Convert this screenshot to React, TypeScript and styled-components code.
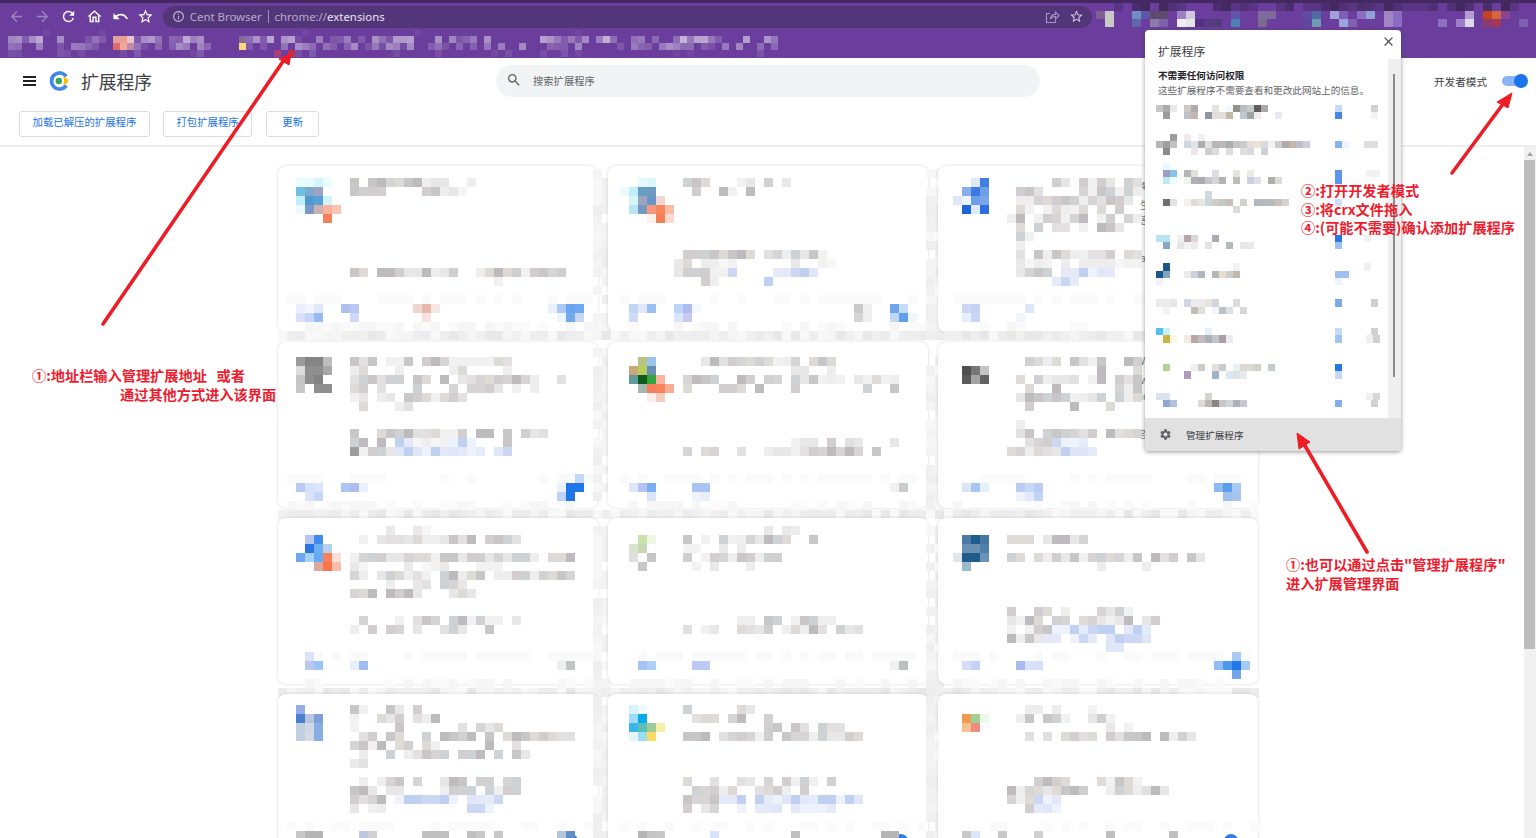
import React from 'react';
import styled, { createGlobalStyle } from 'styled-components';
import {
  MdArrowBack, MdArrowForward, MdRefresh, MdOutlineHome, MdUndo, MdStarBorder,
  MdInfoOutline, MdClose, MdSearch, MdSettings,
} from 'react-icons/md';

const CJK = `"Noto Sans CJK SC", "Noto Sans", "Liberation Sans", sans-serif`;

const Global = createGlobalStyle`
  html, body { margin: 0; padding: 0; background: #fff; height: 100%; overflow: hidden; }
  body { font-family: ${CJK}; }
`;

type Cell = { x: number; y: number; c: string };

const rng = (seed: number) => () => {
  seed = (seed + 0x6d2b79f5) | 0;
  let t = Math.imul(seed ^ (seed >>> 15), 1 | seed);
  t = (t + Math.imul(t ^ (t >>> 7), 61 | t)) ^ t;
  return ((t ^ (t >>> 14)) >>> 0) / 4294967296;
};

const GREY = ['#c8c6c6', '#d6d4d4', '#e2e0e0', '#cfd2d4', '#bdbbbd', '#dedad6', '#e8e7e7', '#d2ced0', '#eeeeee', '#f2f1f1'];
const PALE = ['#f3f2f2', '#ededed', '#f7f6f6', '#e9e9e9'];
const BLUE = ['#e6ebfa', '#dfe6f8', '#cbd7f3', '#eef2fd', '#bfd0f0', '#e4e8f9'];

const parseCells = (s: string): Cell[] =>
  s.split(';').map(e => e.trim()).filter(Boolean).flatMap(e => {
    const [pos, ...cols] = e.split(/\s+/);
    const [r, c] = pos.split(':').map(Number);
    return cols.map((col, i) => ({ x: c + i, y: r, c: `#${col}` })).filter(k => k.c !== '#_');
  });

const parseLines = (s: string, seed: number): Cell[] => {
  const rand = rng(seed);
  const out: Cell[] = [];
  s.split(';').map(e => e.trim()).filter(Boolean).forEach(e => {
    const [row, ...ranges] = e.split(/\s+/);
    ranges.forEach(rg => {
      const kind = /^[pb]/.test(rg) ? rg[0] : 'g';
      const [a, b] = rg.replace(/^[pb]/, '').split('-').map(Number);
      for (let c = a; c <= (b ?? a); c++) {
        const set = kind === 'b' ? BLUE : kind === 'p' ? PALE : GREY;
        const v = rand();
        if (b !== undefined && b - a > 3 && v < 0.16) continue;
        out.push({ x: c, y: Number(row), c: set[Math.floor(rand() * set.length)] });
      }
    });
  });
  return out;
};

const cardNoise = (seed: number, lastColumn: boolean): Cell[] => {
  const rand = rng(seed * 31 + 7);
  const out: Cell[] = [];
  const tones = ['#ececec', '#f0f0f0', '#f5f5f5', '#e8e8e8', '#f8f8f8', '#eeeeee'];
  for (let c = 0; c < (lastColumn ? 35 : 37); c++) out.push({ x: c, y: 18, c: tones[Math.floor(rand() * 6)] });
  if (!lastColumn) {
    for (let r = 0; r < 18; r++) {
      [35, 36].forEach(c => {
        if (rand() > 0.2) out.push({ x: c, y: r, c: ['#f3f4f3', '#f1f1f1', '#f7f7f7', '#eeefee'][Math.floor(rand() * 4)] });
      });
    }
  }
  for (let c = 1; c < 35; c++) {
    if (rand() > 0.45) out.push({ x: c, y: 14, c: '#fafafa' });
    if (rand() > 0.55) out.push({ x: c, y: 17, c: rand() > 0.5 ? '#f6f6f6' : '#fafafa' });
  }
  return out;
};

const MosaicSvg = styled.svg`
  display: block;
  shape-rendering: crispEdges;
`;

const Mosaic: React.FC<{ cells: Cell[]; cw: number; ch: number; ox?: number; oy?: number; width: number; height: number; className?: string }> =
  ({ cells, cw, ch, ox = 0, oy = 0, width, height, className }) => (
    <MosaicSvg className={className} width={width} height={height} viewBox={`0 0 ${width} ${height}`} aria-hidden>
      {cells.map((k, i) => (
        <rect key={i} x={ox + k.x * cw} y={oy + k.y * ch} width={cw} height={ch} fill={k.c} />
      ))}
    </MosaicSvg>
  );

/* ---------- browser chrome ---------- */
const Window = styled.div`
  position: relative;
  width: 1536px;
  height: 838px;
  overflow: hidden;
  background: #fff;
  display: flex;
  flex-direction: column;
`;
const Chrome = styled.header`
  background: #6b3e9e;
  height: 58px;
  flex: none;
  border-top: 3px solid #43295f;
  box-sizing: border-box;
`;
const NavRow = styled.div`
  display: flex;
  align-items: center;
  height: 27px;
  padding-left: 4px;
`;
const NavButton = styled.span<{ $dim?: boolean }>`
  width: 25.8px;
  height: 22px;
  display: flex;
  align-items: center;
  justify-content: center;
  color: ${p => (p.$dim ? '#9d84bd' : '#ffffff')};
  font-size: 17px;
  flex: none;
`;
const Omnibox = styled.div`
  margin-left: 4px;
  width: 929px;
  height: 22px;
  border-radius: 11px;
  background: #53357a;
  display: flex;
  align-items: center;
  padding: 0 8px 0 9px;
  box-sizing: border-box;
  font: 11.4px "Noto Sans", "Liberation Sans", sans-serif;
  flex: none;
`;
const SiteName = styled.span`
  color: #b9acc9;
  margin-left: 5px;
  padding-right: 6px;
  border-right: 1px solid #a08fb6;
  line-height: 13px;
`;
const UrlDim = styled.span`
  color: #b9acc9;
  margin-left: 6px;
`;
const UrlHost = styled.span`
  color: #ece7f2;
`;
const OmniIcons = styled.span`
  margin-left: auto;
  display: flex;
  align-items: center;
  gap: 9px;
  color: #d9cfe5;
`;
const ShareGlyph = styled.svg`
  display: block;
  color: #a995c2;
`;
const ExtensionStrip = styled(Mosaic)`
  flex: none;
  margin-left: 4px;
`;
const BookmarkBar = styled(Mosaic)``;

const stripCells: Cell[] = (() => {
  const r = rng(5);
  const top = ['#4b2d70', '#5a3585', '#43295f', '#6b3e9e', '#513077'];
  const out: Cell[] = [];
  for (let c = 0; c < 49; c++) out.push({ x: c, y: 0, c: top[Math.floor(r() * 5)] });
  const data = `
  1:0 7e6194 c9c9c9 _ _ _ _ _ _ _ _ _ _ 6b3e9e;
  1:4 6f8dc2 5f55ab 5d4b70 5d4b70 _ 9d7fc3 d2c8dc;
  1:15 5f55ab; 1:18 7e6a9c 7e6a9c; 1:23 5f4ca0 4f6aa3 _ a2a0d8 7d5fb5 _ 8d6dc4 8fa0d6 _ a184c4 8d6dc4;
  1:41 b29dd6 _ c4431d d2683f 8c4490;
  2:1 c9c9c9; 2:4 5f66ab _ 8f7baa 8060aa _ eeeeee e5e5e5 552f86 553a85 523e74 _ 4f82b0;
  2:18 7a6a8c; 2:23 5d47a0 6f9bb3 _ _ 9aa5dc 8060b0; 2:32 a184c4 8d6dc4;
  2:38 8d6fc0 _ 9d80c8 ddd8e8 _ 8c3a70 a23a55 _ _ 8060b5`;
  return out.concat(parseCells(data));
})();

const bookmarkCells: Cell[] = (() => {
  const r = rng(11);
  const out: Cell[] = [];
  const segs: [number, number][] = [[1, 14], [16, 30], [34, 43], [44, 59], [61, 75], [77, 93], [94, 110]];
  const tint = (a: number) => `rgba(255,255,255,${a.toFixed(2)})`;
  segs.forEach(([a, b]) => {
    for (let c = a; c <= b; c++) {
      if (r() > 0.3) out.push({ x: c, y: 1, c: tint(0.08 + r() * 0.55) });
      if (r() > 0.4) out.push({ x: c, y: 2, c: tint(0.06 + r() * 0.36) });
      if (r() > 0.8) out.push({ x: c, y: 3, c: tint(0.04 + r() * 0.1) });
      if (r() > 0.9) out.push({ x: c, y: 0, c: tint(0.05) });
    }
  });
  return out.concat(parseCells(`1:16 e0a0a0 eb9e90 e8c2cc; 2:16 e06a6a eeaa98 c38aa8; 1:34 866a9a; 2:34 f8d878; 3:39 a8417a _ c2304f`));
})();

const ShareIcon = () => (
  <ShareGlyph width="15" height="14" viewBox="0 0 15 14" fill="none" stroke="currentColor" strokeWidth="1.1">
    <path d="M5 3.5H1.5v9h9v-3" />
    <path d="M5.5 9c.3-3 2.5-4.6 5-4.6V2l3.5 3.4-3.5 3.4V6.5c-2.2 0-4 .8-5 2.5z" />
  </ShareGlyph>
);

/* ---------- page header ---------- */
const TitleRow = styled.div`
  display: flex;
  align-items: center;
  height: 46px;
  flex: none;
`;
const Brand = styled.div`
  width: 496px;
  display: flex;
  align-items: center;
  padding-left: 23px;
  box-sizing: border-box;
  flex: none;
`;
const Hamburger = styled.span`
  width: 13px;
  height: 10px;
  border-top: 2px solid #202124;
  border-bottom: 2px solid #202124;
  position: relative;
  box-sizing: border-box;
  &::after {
    content: '';
    position: absolute;
    left: 0;
    right: 0;
    top: 2px;
    height: 2px;
    background: #202124;
  }
`;
const Logo = styled.svg`
  margin-left: 13px;
  display: block;
`;
const PageTitle = styled.h1`
  margin: 0 0 0 12px;
  font-size: 17.8px;
  font-weight: 400;
  color: #3c4043;
`;
const Search = styled.div`
  width: 544px;
  height: 32px;
  border-radius: 16px;
  background: #f1f3f4;
  display: flex;
  align-items: center;
  padding: 0 0 2px 10px;
  gap: 11px;
  box-sizing: border-box;
  color: #5f6368;
  font-size: 10.3px;
  flex: none;
`;
const DevMode = styled.div`
  margin-left: auto;
  display: flex;
  align-items: center;
  gap: 15px;
  padding-right: 9px;
  font-size: 10.6px;
  color: #3c4043;
`;
const ToggleTrack = styled.span`
  position: relative;
  display: block;
  width: 23px;
  height: 10px;
  border-radius: 5px;
  background: #8ab4f8;
  margin-right: 2px;
`;
const ToggleKnob = styled.span`
  position: absolute;
  right: -3px;
  top: -2px;
  width: 14px;
  height: 14px;
  border-radius: 50%;
  background: #1a73e8;
`;
const Actions = styled.div`
  display: flex;
  gap: 13px;
  padding: 7px 0 8px 19px;
  flex: none;
  border-bottom: 2px solid #eeeeee;
`;
const ActionButton = styled.button<{ $wide?: boolean }>`
  height: 26px;
  padding: 0 ${p => (p.$wide ? 15 : 12.5)}px 3px;
  margin-left: ${p => (p.$wide ? 1 : 0)}px;
  border: 1px solid #dadce0;
  border-radius: 3px;
  background: #fff;
  color: #1a73e8;
  font: 10.4px/1 ${CJK};
  white-space: nowrap;
`;

/* ---------- main grid ---------- */
const Main = styled.main`
  flex: 1;
  min-height: 0;
  display: flex;
  position: relative;
`;
const Grid = styled.section`
  flex: 1;
  padding: 19px 0 0 278px;
  display: grid;
  grid-template-columns: repeat(3, 320px);
  grid-auto-rows: 166px;
  gap: 10px;
`;
const Card = styled.article`
  position: relative;
  background: #fff;
  border-radius: 8px;
  box-shadow: 0 0 3px rgba(60, 64, 67, 0.22);
`;
const CardMosaic = styled(Mosaic)`
  position: absolute;
  left: 0;
  top: 0;
  overflow: visible;
`;
const Leak = styled.span<{ $x: number; $y: number }>`
  position: absolute;
  left: ${p => p.$x}px;
  top: ${p => p.$y}px;
  font: 10.5px/12px ${CJK};
  color: #70757a;
`;
const ToggleDot = styled.span`
  position: absolute;
  left: 286px;
  top: 140px;
  width: 14px;
  height: 14px;
  border-radius: 50%;
  background: #2a7de8;
`;
const Scrollbar = styled.div`
  width: 12px;
  flex: none;
  background: #f1f1f1;
  position: relative;
`;
const ScrollUp = styled.span`
  position: absolute;
  left: 3px;
  top: 5px;
  width: 0;
  height: 0;
  border-left: 3px solid transparent;
  border-right: 3px solid transparent;
  border-bottom: 4px solid #a3a3a3;
`;
const ScrollThumb = styled.span`
  position: absolute;
  left: 0;
  right: 1px;
  top: 13px;
  height: 489px;
  background: #bdbdbd;
`;

/* ---------- popup ---------- */
const Popup = styled.aside`
  position: absolute;
  left: 1145px;
  top: 30px;
  width: 256px;
  height: 421px;
  background: #fff;
  border-radius: 4px;
  box-shadow: 0 1px 4px rgba(60, 64, 67, 0.55);
  display: flex;
  flex-direction: column;
  overflow: hidden;
  z-index: 2;
`;
const PopupClose = styled.span`
  position: absolute;
  right: 5px;
  top: 4px;
  color: #555;
  font-size: 15px;
  line-height: 0;
`;
const PopupTitle = styled.div`
  font-size: 11.8px;
  color: #3c4043;
  padding: 12px 0 0 13px;
  line-height: 17px;
`;
const PopupBody = styled.div`
  flex: 1;
  min-height: 0;
  position: relative;
  padding: 0 0 0 13px;
`;
const SectionTitle = styled.div`
  font-size: 9.6px;
  font-weight: 700;
  line-height: 14px;
  color: #202124;
  margin-top: 9px;
`;
const SectionText = styled.div`
  font-size: 9.6px;
  line-height: 15px;
  color: #5f6368;
  margin-top: 1px;
  white-space: nowrap;
`;
const ExtensionList = styled(Mosaic)`
  margin: 7px 0 0 -2px;
`;
const PopupTrack = styled.div`
  position: absolute;
  right: 0;
  top: 0;
  bottom: 0;
  width: 13px;
  background: #efefef;
`;
const PopupThumb = styled.span`
  position: absolute;
  left: 5px;
  top: 15px;
  width: 2px;
  height: 303px;
  background: #8c8c8c;
`;
const PopupFooter = styled.footer`
  height: 33px;
  flex: none;
  background: #e1e1e1;
  display: flex;
  align-items: center;
  padding-left: 14px;
  gap: 14px;
  font-size: 9.6px;
  color: #3c4043;
`;
const GearIcon = styled.span`
  color: #5f6368;
  font-size: 13px;
  line-height: 0;
`;

/* ---------- annotations ---------- */
const Overlay = styled.svg`
  position: absolute;
  left: 0;
  top: 0;
  z-index: 3;
  pointer-events: none;
`;
const Note = styled.div<{ $x: number; $y: number }>`
  position: absolute;
  left: ${p => p.$x}px;
  top: ${p => p.$y}px;
  z-index: 4;
  color: #ee1c2e;
  font: 700 14.2px/18.5px ${CJK};
  white-space: pre;
`;
const NoteLine = styled.div<{ $indent?: number }>`
  padding-left: ${p => p.$indent ?? 0}px;
`;

/* ---------- data ---------- */
type CardData = { cells: string; lines: string; leak?: [number, number, string][]; toggle?: boolean };

const CARDS: CardData[] = [
  {
    cells: `1:2 e8fbfd e8fbfd d2f5fb ebfcfd; 2:2 6fbfe0 7ea8cc 9ea3c6; 3:2 c0eefa 5098cd 56a1d8 d2f4fb;
      4:2 eefbfe 7a99c4 c9b2b0 fdb19c fcc3b2; 5:5 f57f58;
      15:2 eceefc f2f5fd dfe9fa _ _ aebff0 b9c5f2; 15:15 f0d5cf e5b8aa f6e5e1; 15:30 e9effc aac9f7 6aa5ee 6ea8ef;
      16:2 dadffa c3d6f8 96bbf4; 16:8 d0daf8; 16:16 f5e3e1; 16:31 eef5fe 73a8ec c7d9f2`,
    lines: `1 8 10-18 21; 2 8-12 16-19 p20; 11 8-9 11-31; 12 24`,
  },
  {
    cells: `1:3 e5f9fd dcf6fb; 2:1 ebfafd c2eef8 689ec4 7199c0; 3:2 d5f5fc 9ca3c0 6797c8 f0d8d0;
      4:2 b8e5f2 7398c4 f9977a f6875f f9bca4; 5:4 fdf2ee f67f58 f8d9cf;
      15:2 c2d5f5 dfe7fa 9bc0f3 _ _ bdd5f6 aebcef f5f9fe; 15:27 c9c9c9 eeeeee; 15:31 6fa5ea c5ddf7;
      16:2 d0dbf6; 16:7 d9e6fb c8c9f2; 16:27 d5d5d5 eeeeee; 16:31 c0d8f6 619fe8 f0f5fd`,
    lines: `1 8-10 14-15 17 p19; 2 9 12-13 15; 9 8-24; 10 p7 8 p10-13 p20 p23-24; 11 7-12 b13-22; 12 10-11 b17`,
  },
  {
    cells: `1:3 dde8f8 3f7fe0; 2:2 8aaeea 4179e3 6b9de8; 3:1 dce8f8 eef4fd 6d9ee9 7aa5e8; 4:2 1e64d9 dde8f8 2e70de;
      15:2 cfd6f5 c6d2f3; 15:9 dde6f8; 16:2 e8eefb c8d6f5; 16:8 f0f4fc`,
    lines: `1 12-21; 2 8-10 15-21; 3 8-21; 4 7-21; 5 7-21; 6 8 10 12-13 15 17-21; 7 8-9; 8 8; 9 8-21; 10 p8-21; 11 8-11 b12-18; 12 b12-14`,
    leak: [[202, 14, '4,'], [202, 33, '生'], [202, 48, '密'], [202, 86, 'ah']],
  },
  {
    cells: `1:2 9b9b9b 858585 858585 bdbdbd; 2:2 dcdcdc 8f8f8f 8f8f8f a8a8a8; 3:2 c6c6c6 8e8e8e 838383; 4:2 c8c8c8 _ 8f8f8f 8f8f8f;
      11:8 a09d9d; 14:33 c3d7f6;
      15:2 b8cbf4 d5e2fb dae6fc _ _ adc6f5 b0bcf0 e9f0fe; 15:31 e9f1fe 1f76e8 1f76e8;
      16:3 d8e4fb c8d6f6; 16:31 bad3f7 1f76e8`,
    lines: `1 8-25; 2 8-9 13 19-20 25; 3 8-31; 4 8-9 11 15 19 21-24 26 28; 5 8-20; 6 9 13-14; 9 8 10-29; 10 8-9 11 b13-14 p15-18 b19-21 25; 11 9-12 b13-25`,
  },
  {
    cells: `1:3 b5c483 9dc4ea; 2:2 c9a97c b7cf5f 6690ad; 3:2 659a9a 0f5a1c 31a53a fbb5a0; 4:3 a3b9ad f67e5b f5835e f8ac94; 5:4 fceee9 f7cdbf;
      15:2 e0e5f8 b2c4f2 7bb0f0; 15:9 a9c3f2 a9c3f2; 15:31 f1f1f1 c8ccd0; 16:4 dae4f8; 16:9 eff2fd eaeefa`,
    lines: `1 8-24; 2 20-21 24; 3 8-11 14-15 17-31; 4 8 12-14 16 20 28 31; 10 20-22 24 26-27 31; 11 8 10-11 14 17-30`,
  },
  {
    cells: `2:2 4f4f4f 767676 c3c3c3; 3:2 5a5a5a a3a3a3 636363;
      15:2 dde6f8 a8c6f4 e5eefb; 15:8 b9cdf5 c6d7f7 bccbf3; 15:30 8ebaf4 5c9eeb a5c8f5;
      16:8 eef2fc e3e9fa c0d5f6; 16:31 a0c0ee a5c4ee`,
    lines: `1 8-21; 2 17 21; 3 8-21; 4 9 12 19-21; 5 8-21; 6 9 14 18; 8 8; 9 8-21; 10 9-11 b12-15; 11 7-12 b13-16`,
    leak: [[202, 13, 'W'], [202, 32, 'w'], [202, 48, 'lo'], [202, 84, 'g']],
  },
  {
    cells: `1:3 b5c7ee 3f8ced; 2:3 2b74e3 6cb0f2 bad1ec; 3:2 6ea6ef a6d0f8 64aaf5 f9805c fcdfd6; 4:4 d9a89e f9754c f9bda9;
      14:3 d9e4fa; 15:3 bcc7f0 98c5f5; 15:8 e8effc a0bff0; 15:31 eeeeee c1c5c5`,
    lines: `0 p12 p15-16; 1 9-26; 3 8-32; 4 p8-9 p14-18 p22-24; 5 8-32; 6 p12 15-16 18-20; 7 8-10 12-17 19-21; 10 9 13 15-17 19-26; 11 8 10-15 18-20 23`,
  },
  {
    cells: `1:3 c8e1ad f0f7e4; 2:2 d9e3cc c5d8b1; 3:2 e0e0e0 _ c5c5c5; 4:3 c8c8c8;
      15:3 a5c2f4 acd0f8; 15:9 bcc9f2 bcc9f2; 15:31 f0f0f0 bcbfbf`,
    lines: `0 p17 p19-20; 1 8-20 22; 2 p8-9 p12 p14; 3 8-19; 4 p9 p11 p15; 10 14-15 17-18 20-24; 11 8 10-11 14-27`,
  },
  {
    cells: `1:2 4a7aa5 1d5c90 44769f; 2:2 6790b3 6790b3 4d80aa; 3:1 e0e8ee 1f5b8b 1f5b8b 6b93b7; 4:2 9ab9cd;
      15:2 d5dcf8 c6d2f5; 15:8 a9bcf0 d8e1fa d8e1fa; 14:32 a9caf5; 15:30 90bdf3 4b99ea 1f78e8 a4caf5; 16:32 72a6e8`,
    lines: `1 7-15; 3 7-28; 4 p17 p22; 9 7 10-11 13 17-20; 10 7-25; 11 7 9-11 b12-22; 12 7-10 b11-22; 13 b18-19`,
  },
  {
    cells: `1:2 95ade6; 2:2 4a7fd0 b6c6e0 7f9fd6; 3:2 c0d0e2 d0d8e4 88aee6; 4:2 c0cfe0 d4dbe5 88aee6;
      15:2 c8c8c8 b5b5b5 b5b5b5; 15:9 c0c8e0 d0d0d0; 15:16 c0c0c0 c0c0c0 c0c0c0; 15:21 c0c0c0 c8c8c8; 15:24 c8c8c8; 15:31 b5c5d8 6090cc`,
    lines: `1 8-9 12-13 15; 2 8 11-13 15-17; 3 p8 13 20 22-24; 4 9-10 12-32; 5 8-11 13-17 23 26; 6 p9 12 14-18 20-22 24-28; 7 p8 9; 9 9 11-13 15 18-20 22-23 25-26; 10 8-10 12-13 18-21 23-26; 11 8-11 b12-24; 12 8 10-11 b21-23`,
    toggle: true,
  },
  {
    cells: `1:2 d8f2fb f0fbff; 2:2 9fdcf3 06a9e9; 3:2 39b7ea 5cbfb5 9fcb96 f5f0a8; 4:2 e5f5fb 9bdbf3 fcdb62;
      15:3 b5b5b5 c5c5c5 c8c8c8; 15:11 d8e2f8; 15:20 c0c0c0; 15:30 b5b5b5 b5b5b5`,
    lines: `1 8 9-15; 2 9-11 13-14 17; 3 17-18 20-21 23-25; 4 8-27; 9 8 11 14-15 17 19-22 24; 10 8-22; 11 8-11 b12-27; 12 8 10-11 b14-25`,
    toggle: true,
  },
  {
    cells: `2:2 ef9a4f a2d093 eef8ea; 3:2 f4c08e f08b82;
      15:2 c8c8c8 dde6f8 _ _ c8c8c8; 15:10 d0d0d0; 15:18 c0c0c0; 15:25 c0c0c0`,
    lines: `1 p9-10 p12 p16; 2 8-9 11-13 16-18; 3 p18 p20; 4 8-27; 9 10-13 16-21; 10 7-24; 11 7-9 b10-12; 12 9 b10-12`,
    toggle: true,
  },
];

const LIST = parseCells(`
0:0 c5c5c5 aaaaaa e9e9e9 _ cfc9c6 b0aaa8 _ _ e3e3e0 _ f2f8fb 919089 b7bbc2 c9cbc9 5e5c5f aea6ad;
1:1 9b9b9b; 1:4 bcc3c7 c2b8b0 _ 8f979b e0e0df dfdfdb c4b9a6 _ bdc7cc 9ea4a6 f0eeec _ _ e8e9ee;
0:25.57 c6dbf9; 1:25.57 4787e8; 0:30.71 d0d0d0; 1:30.71 f3f3f3;
4:1 _ 9c9c9c; 4:4 efeae6 _ f0f0f0;
5:0 b6b6b6 9f9f9f c2c2c2 _ ccd6e4 e0e4ea adadad dfdfdd b8b5b4 bcb9b6 a9aeae c6c4c0 c7cdd0 e6e0d8 ebe3d5 d6dadd f2f2f0 cfcbc9 adaaa8 c2b8ae c0bccc d0ceda;
6:1 8a8a8a; 6:5 e8e8e8 _ cecece dddddd _ dedbdd _ e2dfe2 dad9e0 _ cdd0d8;
5:25.57 86b2f2 eef4fd; 5:29.71 dedede dedede;
8:1 e6fbfd;
9:1 9d9cc2 84c6e8; 9:4 b6b6b2 e0e0da _ _ dcdce4 _ _ e6e3e0 _ ecece6;
10:1 c0e8f2 eefbff; 10:4 f2f2f0 acb2b4 adaab2 c6c6ca d2d6d6 b6b2b6 _ bcbcba _ cccfe0 dde2ea _ b0b0a8 dddcd4;
9:25.57 5b96ec; 10:25.57 5b96ec; 9:30 f2f2f2 f2f2f2;
13:1 6f6f6f e3e3e3; 13:4 f6f1ea dfdcd8 e8e8e0 cdd8dc d2ccc6 c2c8c4 c8bcb8 _ d0d0ca _ b0b8c4 b8b8c0 b8bcba c8c0bc d8d2cc;
12:5 _ _ d0d8dc; 14:11 dddcd8; 13:25.57 d0dff7;
18:0 b6e4ef b6e4ef; 18:3 eeeeee b5a6b0 d8d6d6 _ _ a9a9b4;
19:1 88a8c8; 19:3 e6e6e6 f2f2f2 ececec _ dfe4e2 _ _ b0bcbc _ e8e8ec e8e8ec;
18:25.57 2478e6; 19:25.57 a0c0f2; 18:29.71 f2f2f2;
22:1 1d5586; 23:0 1d5586 80a3c4; 23:4 eeeae8 c8d2d8 b0b4bc _ b6b8b6 e8dccc cccccc c0b8a8;
22:11 eff3f8; 24:0 eef2f8; 23:25.57 a0c0f2 a0c0f2; 24:25.57 eef3fc; 22:29.71 f0f0f0;
27:0 ebebeb ebebeb e6e6e6 _ d2d8e0 eaeef2 ece9e6 e6e2de d2d6dc _ _ dcdcdc;
28:1 f2f2f2; 28:5 c4bcb4 e2e0de _ f2f5fa bcc2c8 dce0e4 _ d4d6d8; 27:25.57 7ca8ec; 27:30.71 d0d0d0;
31:0 54c0ec c6f1f5; 31:7 e6f0f8; 32:1 c8b444 fcf8e4; 32:4 f2ebe4 bca6a6 c4bcc0 aab2b6 c0c6cc aa9eaa ebecf0;
31:25.57 c6daf6; 32:25.57 a4c2f2; 32:30 f0f0f0 d0d0d4; 31:30.71 d0d0d4;
36:1 b2d296; 36:5 eaf3f4 ccccc4 _ e8e0d8 cccccc _ e8eef6 dcd8d4 d8dcd4 d4d2cc _ c4ced0; 37:4 ae9cba; 37:8 9fb4c6; 37:10 dde8f4 dde2e2 e6ecee;
36:25.57 2478e6; 37:25.57 c6d8f6;
40:0 dce3f0 dce3f0; 40:7 d2d2ce; 41:1 8ea8d0 b2c0e0; 41:6 dcdcd6 bcb8b0 8a8684 c8c6ca d4d4dc b0b0bc c6c8d2;
41:25.57 80aeee; 40:30 f0f0f0 d8d8d8; 41:30.71 d0d0d0;
`);

const ARROWS = [
  { line: '103,324 284,60', head: '291,54 279,59 289,65' },
  { line: '1452,173 1503,104', head: '1512,93 1497,102 1508,108' },
  { line: '1367,552 1304,444', head: '1297,433 1310,442 1299,449' },
];

const OFFSETS_X = [0, 3, 6];
const OFFSETS_Y = [3, 6, 8, 2];

const ExtensionCard: React.FC<{ data: CardData; index: number }> = ({ data, index }) => {
  const ox = OFFSETS_X[index % 3];
  const oy = OFFSETS_Y[Math.floor(index / 3)];
  const cells = [...cardNoise(index + 1, index % 3 === 2), ...parseLines(data.lines, index + 3), ...parseCells(data.cells)];
  return (
    <Card>
      {data.leak?.map(([x, y, t]) => <Leak key={y} $x={x} $y={y}>{t}</Leak>)}
      {data.toggle && <ToggleDot />}
      <CardMosaic cells={cells} cw={9} ch={9} ox={ox} oy={oy} width={320} height={166} />
    </Card>
  );
};

export default function App() {
  return (
    <Window>
      <Global />
      <Chrome>
        <NavRow>
          <NavButton $dim><MdArrowBack /></NavButton>
          <NavButton $dim><MdArrowForward /></NavButton>
          <NavButton><MdRefresh /></NavButton>
          <NavButton><MdOutlineHome /></NavButton>
          <NavButton><MdUndo /></NavButton>
          <NavButton><MdStarBorder /></NavButton>
          <Omnibox>
            <MdInfoOutline size={13} color="#c4b8d4" />
            <SiteName>Cent Browser</SiteName>
            <UrlDim>chrome://<UrlHost>extensions</UrlHost></UrlDim>
            <OmniIcons><ShareIcon /><MdStarBorder size={15} /></OmniIcons>
          </Omnibox>
          <ExtensionStrip cells={stripCells} cw={9} ch={8} width={440} height={27} />
        </NavRow>
        <BookmarkBar cells={bookmarkCells} cw={7} ch={7} ox={1} oy={-1} width={800} height={28} />
      </Chrome>

      <TitleRow>
        <Brand>
          <Hamburger />
          <Logo width="20" height="20" viewBox="0 0 20 20">
            <path d="M17.2 5.6A8 8 0 1 0 17.2 14.4" fill="none" stroke="#3f86ea" strokeWidth="3.6" />
            <circle cx="9.8" cy="10" r="3.2" fill="#34a853" />
            <path d="M14 6.2c3 0 5 1.700 5 3.800s-2 3.800-5 3.800c1.500-2.300 1.500-5.300 0-7.600z" fill="#fbbc05" />
          </Logo>
          <PageTitle>扩展程序</PageTitle>
        </Brand>
        <Search>
          <MdSearch size={16} />
          <span>搜索扩展程序</span>
        </Search>
        <DevMode>
          <span>开发者模式</span>
          <ToggleTrack><ToggleKnob /></ToggleTrack>
        </DevMode>
      </TitleRow>
      <Actions>
        <ActionButton>加载已解压的扩展程序</ActionButton>
        <ActionButton>打包扩展程序</ActionButton>
        <ActionButton $wide>更新</ActionButton>
      </Actions>

      <Main>
        <Grid>
          {CARDS.map((c, i) => <ExtensionCard key={i} data={c} index={i} />)}
        </Grid>
        <Scrollbar>
          <ScrollUp />
          <ScrollThumb />
        </Scrollbar>
      </Main>

      <Popup>
        <PopupClose><MdClose /></PopupClose>
        <PopupTitle>扩展程序</PopupTitle>
        <PopupBody>
          <SectionTitle>不需要任何访问权限</SectionTitle>
          <SectionText>这些扩展程序不需要查看和更改此网站上的信息。</SectionText>
          <ExtensionList cells={LIST} cw={7} ch={7.2} width={228} height={310} />
          <PopupTrack><PopupThumb /></PopupTrack>
        </PopupBody>
        <PopupFooter>
          <GearIcon><MdSettings /></GearIcon>
          <span>管理扩展程序</span>
        </PopupFooter>
      </Popup>

      <Overlay width="1536" height="838" viewBox="0 0 1536 838">
        {ARROWS.map(a => (
          <g key={a.line}>
            <polyline points={a.line} fill="none" stroke="#ee1c25" strokeWidth="3.6" strokeLinecap="round" />
            <polygon points={a.head} fill="#ee1c25" stroke="#ee1c25" strokeWidth="1" />
          </g>
        ))}
      </Overlay>

      <Note $x={32} $y={366}>
        <NoteLine>①:地址栏输入管理扩展地址   或者</NoteLine>
        <NoteLine $indent={88}>通过其他方式进入该界面</NoteLine>
      </Note>
      <Note $x={1301} $y={181}>
        <NoteLine>②:打开开发者模式</NoteLine>
        <NoteLine>③:将crx文件拖入</NoteLine>
        <NoteLine>④:(可能不需要)确认添加扩展程序</NoteLine>
      </Note>
      <Note $x={1286} $y={555}>
        <NoteLine>①:也可以通过点击"管理扩展程序"</NoteLine>
        <NoteLine>进入扩展管理界面</NoteLine>
      </Note>
    </Window>
  );
}
